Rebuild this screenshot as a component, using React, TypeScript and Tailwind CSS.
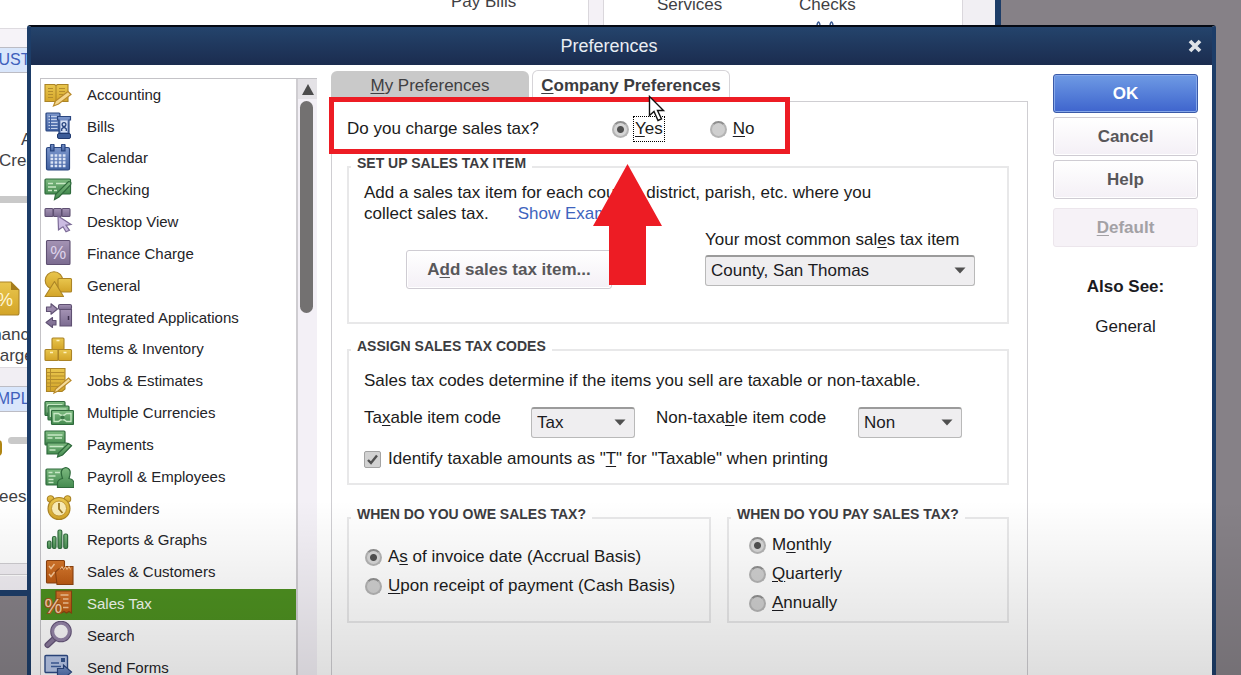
import type { ReactNode } from "react";

const gold = { fill: "url(#gold)", stroke: "#ab8426", strokeWidth: 1.1 };
const blue = { fill: "url(#blue)", stroke: "#2a4680", strokeWidth: 1.2 };
const green = { fill: "url(#green)", stroke: "#2f6a3c", strokeWidth: 1.2 };
const purple = { fill: "url(#purple)", stroke: "#5f5072", strokeWidth: 1.1 };
const orange = { fill: "url(#orange)", stroke: "#8d4310", strokeWidth: 1.1 };

function Gradients() {
  const stops: [string, string, string][] = [
    ["gold", "#e9c64e", "#d3a428"],
    ["blue", "#7d97cc", "#4262a2"],
    ["green", "#7dba80", "#448a4f"],
    ["purple", "#a493b4", "#7b6b90"],
    ["orange", "#d3752b", "#bb5912"],
  ];
  return (
    <svg className="absolute size-0" aria-hidden="true">
      <defs>
        {stops.map(([id, a, b]) => (
          <linearGradient key={id} id={id} x1="0" y1="0" x2="0" y2="1">
            <stop offset="0" stopColor={a} />
            <stop offset="1" stopColor={b} />
          </linearGradient>
        ))}
      </defs>
    </svg>
  );
}

const icons: Record<string, ReactNode> = {
  Accounting: (
    <>
      <path d="M2 4.500h9.500l1.500 1 1.500-1H25v17H14.500L13 23l-1.500-1.500H2z" {...gold} />
      <path d="M13 5.500v16" stroke="#ab8426" />
      <path d="M5 8.500h5M5 11.500h5M5 14.500h5M5 17.500h5M16 8.500h6M16 11.500h6M16 14.500h4" stroke="#b48d2c" />
      <path d="M25 11.500l3 3-12.500 9.500-5 2 2-5z" fill="#f4d68c" stroke="#b98a2a" strokeWidth="1.200" />
    </>
  ),
  Bills: (
    <>
      <rect x="3" y="1" width="14" height="18" rx="1" {...blue} />
      <path d="M5.500 4.500h9M5.500 7.500h9M5.500 10.500h9M5.500 13.500h9M5.500 16.500h9" stroke="#c3d0ea" />
      <path d="M7.500 3v14" stroke="#3f5f9f" />
      <path d="M14.500 4.500h13v3.500h-1.500V22H16V8h-1.500z" {...blue} />
      <rect x="17.500" y="8.500" width="7" height="12" fill="#d5e0f4" />
      <circle cx="21" cy="12.500" r="1.900" fill="none" stroke="#2a4680" strokeWidth="1.300" />
      <path d="M18.700 19v-2q2.300-3 4.600 0v2" fill="none" stroke="#2a4680" strokeWidth="1.300" />
      <rect x="14.500" y="21.500" width="13" height="5" rx="1.500" fill="#3c5c99" stroke="#203a70" />
    </>
  ),
  Calendar: (
    <>
      <rect x="3.500" y="3.500" width="23" height="22.500" rx="1.500" {...blue} />
      <path d="M7.500.8q2-1.200 3.500 0v6H7.500zM18.500.8q2-1.200 3.500 0v6h-3.500z" {...blue} />
      <path d="M7.500 11.500h15M7.500 15h15M7.500 18.500h15M7.500 22h15" stroke="#dbe4f5" strokeWidth="2.500" strokeDasharray="2.700 1.400" />
    </>
  ),
  Checking: (
    <>
      <rect x="2" y="4" width="25.500" height="15" rx="1" {...green} />
      <path d="M5 8.500h5M13 8.500h10M5 12h8M5 15.500h4M11 15.500h3" stroke="#c8e8c5" strokeWidth="1.300" />
      <path d="M25.500 6.500q3.500 0 2 3.500L16 22l-4.500 2.500 1-5z" {...green} />
    </>
  ),
  "Desktop View": (
    <>
      <rect x="2" y="1.500" width="8" height="8" rx="1" {...purple} />
      <rect x="10.500" y="1.500" width="8" height="8" rx="1" {...purple} />
      <rect x="19" y="1.500" width="8" height="8" rx="1" {...purple} />
      <path d="M15 9l13 8.500-5 .8 3.500 5-3.500 1.500-3-5-4.500 3z" fill="#cbbbe2" stroke="#7b6a96" strokeWidth="1.200" />
    </>
  ),
  "Finance Charge": (
    <>
      <rect x="3.500" y="1.500" width="23.500" height="24" rx="1" {...purple} />
      <text x="15.300" y="20" textAnchor="middle" fontSize="18" fill="#ddd2ea" fontFamily="Liberation Sans, sans-serif">%</text>
    </>
  ),
  General: (
    <>
      <circle cx="11" cy="9.500" r="8.800" {...gold} />
      <rect x="15" y="7.500" width="13.500" height="13.500" rx="1" {...gold} />
      <path d="M11.500 10.500L20.500 25.500H2z" {...gold} strokeLinejoin="round" />
    </>
  ),
  "Integrated Applications": (
    <>
      <path d="M3.500 4h4.500V.8L14.500 6 8 11.200V8.500H3.500zM13 17.500H9.500V14.500L3 19.500l6.500 5V22H13z" {...purple} strokeLinejoin="round" />
      <rect x="15.500" y="1.500" width="13" height="5" rx="1.500" {...purple} />
      <path d="M17 6.500h11.500v16.500H17z" {...purple} />
      <path d="M25.500 13v4" stroke="#3d304e" strokeWidth="1.500" />
    </>
  ),
  "Items & Inventory": (
    <>
      <rect x="9" y="3" width="12" height="11.500" rx="1" {...gold} />
      <rect x="2" y="14.500" width="13" height="11" rx="1" {...gold} />
      <rect x="15.500" y="14.500" width="13" height="11" rx="1" {...gold} />
      <path d="M13.500 5.500h3M7 17.500h3M20.500 17.500h3" stroke="#fff1bd" strokeWidth="1.600" />
    </>
  ),
  "Jobs & Estimates": (
    <>
      <path d="M3.500 1.500h18.500V22l-3 2.500H3.500z" {...gold} />
      <path d="M4 5.500h17.500M4 9h17.500M4 12.500h17.500M4 16h14M4 19.500h11M7.500 2v22" stroke="#b48d2c" />
      <path d="M25.500 11l2.500 2.500-13 10.500-4 2 1.500-4z" fill="#f6dc9a" stroke="#b98a2a" strokeWidth="1.200" />
    </>
  ),
  "Multiple Currencies": (
    <>
      <rect x="2" y="3.500" width="20" height="14" rx="1" {...green} />
      <path d="M4.500 6.500h15M4.500 6.500v8" stroke="#c8e8c5" strokeWidth="1.200" />
      <rect x="5" y="8" width="21" height="14" rx="1" {...green} />
      <path d="M7.500 11h16M7.500 11v8" stroke="#c8e8c5" strokeWidth="1.200" />
      <rect x="8.500" y="12.500" width="22" height="14" rx="1" {...green} />
      <path d="M11 15.500h4.500q4 4 8 0H28v8h-4.500q-4-4-8 0H11z" fill="none" stroke="#c8e8c5" strokeWidth="1.300" />
      <circle cx="19.500" cy="19.500" r="2" fill="#3c7a48" />
    </>
  ),
  Payments: (
    <>
      <rect x="2" y="1" width="20" height="14" rx="1" {...green} />
      <path d="M4.500 5h15M4.500 8h5M12 8h7" stroke="#c8e8c5" strokeWidth="1.300" />
      <path d="M4 13h20l4 3-8 8H4z" {...green} />
      <path d="M6.500 16.500h14M6.500 20h6" stroke="#c8e8c5" strokeWidth="1.300" />
      <path d="M25.500 13.500l3 2-9 9.500-5 2 1-4z" {...green} />
    </>
  ),
  "Payroll & Employees": (
    <>
      <rect x="3" y="7" width="21" height="16" rx="1" {...green} />
      <path d="M5.500 10.500h4M12 10.500h5M5.500 14h7M5.500 17.500h5M5.500 20.500h5" stroke="#c8e8c5" strokeWidth="1.300" />
      <path d="M14.500 25.500v-4q0-4 5-5-3.500-10 3.300-11 6.700 1 3.200 11 5 1 5 5v4z" {...green} />
    </>
  ),
  Reminders: (
    <>
      <circle cx="7.500" cy="5" r="3.200" {...gold} />
      <circle cx="24.500" cy="5" r="3.200" {...gold} />
      <circle cx="16" cy="14.500" r="11" {...gold} />
      <circle cx="16" cy="14.500" r="7.500" fill="#f8eab4" stroke="#c29734" />
      <path d="M16 9v6l3.500 4" fill="none" stroke="#9a7620" strokeWidth="1.800" />
    </>
  ),
  "Reports & Graphs": (
    <>
      <rect x="4.500" y="15" width="3.500" height="7.500" rx="1.500" {...green} />
      <rect x="9.500" y="10.500" width="3.500" height="12" rx="1.500" {...green} />
      <rect x="15" y="4" width="3.800" height="18.500" rx="1.500" {...green} />
      <rect x="20.800" y="8" width="3.800" height="14.500" rx="1.500" {...green} />
    </>
  ),
  "Sales & Customers": (
    <>
      <rect x="3.500" y="2.500" width="18" height="22.500" rx="1" {...orange} />
      <path d="M6 8l2 2.500L11.500 6M6 16l2 2.500 3.500-4.500" fill="none" stroke="#f6c797" strokeWidth="1.400" />
      <path d="M12.500 14l3-3h5l1.500-2.500H30V26.500H14z" {...orange} />
      <path d="M17 11.500l2-3 1.500 3 2-3 1.500 3 2-3 1.500 3" fill="none" stroke="#f6c797" />
    </>
  ),
  "Sales Tax": (
    <>
      <path d="M13 2h15.500v22l-2.500-1.500-2.500 1.500-2.500-1.500-2.500 1.500-5.500-1z" {...orange} />
      <path d="M17.500 6h8M20 10h5.500M20 14h5.500M20 18.500h5.500" stroke="#f3c596" strokeWidth="1.400" />
      <text x="10.500" y="24" textAnchor="middle" fontSize="20" stroke="#a8561a" strokeWidth="2" paintOrder="stroke" fill="#f6d3ac" fontFamily="Liberation Sans, sans-serif">%</text>
    </>
  ),
  Search: (
    <>
      <path d="M12.500 16.500L4.500 24" stroke="#66567a" strokeWidth="6" strokeLinecap="round" />
      <path d="M12.500 16.500L4.500 24" stroke="#8a7a9c" strokeWidth="3.500" strokeLinecap="round" />
      <circle cx="18" cy="10.500" r="8.300" fill="none" stroke="#66567a" strokeWidth="5" />
      <circle cx="18" cy="10.500" r="8.300" fill="#fbfafc" stroke="#9585a8" strokeWidth="3" />
    </>
  ),
  "Send Forms": (
    <>
      <rect x="2" y="2.500" width="22.500" height="17" rx="1" fill="#b9c8ea" stroke="#2f4c88" strokeWidth="1.400" />
      <path d="M8 10h8M8 13.500h10" stroke="#3f5f9f" strokeWidth="1.300" />
      <rect x="18" y="5" width="4" height="4" fill="#35558f" />
      <path d="M14.500 15.500h6V12l8 7-8 7v-3.500h-6z" {...blue} />
    </>
  ),
};

const categories = Object.keys(icons);

/* Underlines the access key of a label, written as "pre_Kpost". */
function Keyed({ text }: { text: string }) {
  const at = text.indexOf("_");
  return (
    <span>
      {text.slice(0, at)}
      <span className="underline decoration-1 underline-offset-2">{text[at + 1]}</span>
      {text.slice(at + 2)}
    </span>
  );
}

function Radio({ name, label, checked, focused }: { name: string; label: string; checked?: boolean; focused?: boolean }) {
  return (
    <label className="flex items-center gap-[6px]">
      <input
        type="radio"
        name={name}
        defaultChecked={checked}
        className="size-[17px] shrink-0 appearance-none rounded-full border-2 border-[#b4b4b4] border-t-[#8f8f8f] bg-[#cfcfcf] checked:bg-[radial-gradient(circle,#505050_3px,#d6d6d6_4px)]"
      />
      <span className={focused ? "leading-[22px] outline-1 outline-offset-1 outline-dotted outline-black" : ""}>
        <Keyed text={label} />
      </span>
    </label>
  );
}

function Select({ id, value, className }: { id: string; value: string; className: string }) {
  return (
    <div className={"relative " + className}>
      <select
        id={id}
        defaultValue={value}
        className="h-[31px] w-full appearance-none rounded-[3px] border border-[#b9b9b9] border-t-2 border-t-[#9b9b9b] bg-[#efeef0] px-[5px] text-[17px] text-[#1b1b1f]"
      >
        <option>{value}</option>
      </select>
      <svg className="pointer-events-none absolute top-3 right-[9px] h-[7px] w-3" viewBox="0 0 12 7" aria-hidden="true">
        <path d="M.5.5h11L6 6.500z" fill="#505050" />
      </svg>
    </div>
  );
}

function Group({ title, className, children }: { title: string; className: string; children: ReactNode }) {
  return (
    <fieldset className={"min-w-0 border-2 border-[#e8e8e9] " + className}>
      <legend className="ml-[2px] px-[6px] pb-2 text-sm leading-[14px] font-bold text-[#3c3c40]">{title}</legend>
      {children}
    </fieldset>
  );
}

const plainButton =
  "rounded-[3px] border border-[#cfccd3] bg-linear-to-b from-white to-[#f4f0f6] font-bold text-[#58575a] inset-shadow-[0_0_0_1px_#ffffff]";

function MainWindow() {
  const band = "absolute left-0 w-10 border-y border-[#bcbcc4] bg-[#d9e6fb] text-base leading-6 text-[#3f60bb]";
  return (
    <div className="absolute top-0 left-0 h-[596px] w-[1001px] overflow-hidden border-r-[6px] border-b-[6px] border-[#1d3d68] bg-white text-[17px] text-[#3f3f44]">
      <div className="absolute top-0 left-[588px] h-8 w-4 border-x border-[#dad7dc] bg-[#f4f1f6]" />
      <div className="absolute top-0 left-[962px] h-8 w-9 border-l border-[#dad7dc] bg-[#f1eff3]" />
      <span className="absolute -top-2 left-[451px] leading-5">Pay Bills</span>
      <span className="absolute -top-[5px] left-[657px] leading-5">Services</span>
      <span className="absolute -top-[5px] left-[799px] leading-5">Checks</span>
      <svg className="absolute top-[21px] left-[816px] h-1 w-5" viewBox="0 0 20 4" aria-hidden="true">
        <path d="M1 4q1.500-6 3 0M14 4q1.500-6 3 0" fill="none" stroke="#35558f" strokeWidth="1.500" />
      </svg>

      <div className="absolute top-7 left-0 h-5 w-10 border-t border-[#dedbe0] bg-[#f6f3f8]" />
      <div className={band + " top-[47px]"}>
        <span className="-ml-[13px]">CUSTOMERS</span>
      </div>
      <span className="absolute top-[130px] left-[21px] leading-5">Accept</span>
      <span className="absolute top-[151px] -left-[1px] leading-5">Credit</span>
      <div className="absolute top-[196px] left-0 h-[7px] w-10 bg-[#c9c9c9]" />
      <svg className="absolute top-[281px] left-0 h-[35px] w-5" viewBox="0 0 20 35" aria-hidden="true">
        <path d="M-6 1h17l8 8v23q0 2-2 2H-6z" {...gold} />
        <path d="M11 1v8h8z" fill="#a57d1c" />
        <text x="5" y="25" textAnchor="middle" fontSize="18" fill="#fff6d6" fontFamily="Liberation Sans, sans-serif">%</text>
      </svg>
      <span className="absolute top-[325px] -left-[22px] leading-5">Finance</span>
      <span className="absolute top-[346px] -left-[22px] leading-5">Charges</span>
      <div className="absolute top-[367px] left-0 h-5 w-10 border-t border-[#dedbe0] bg-[#f1eef3]" />
      <div className={band + " top-[386px]"}>
        <span className="-ml-[14px]">EMPLOYEES</span>
      </div>
      <div className="absolute top-[437px] left-2 h-[7px] w-8 rounded-full bg-[#c9c9c9]" />
      <div className="absolute top-[440px] -left-3 h-4 w-[14px] rounded-sm bg-[#b08512]" />
      <span className="absolute top-[487px] -left-[1px] leading-5">ees</span>
      <div className="absolute top-[563px] left-0 h-3 w-10 border-y border-[#cfcdd1] bg-[#f1eef3]" />
      <div className="absolute top-[576px] left-0 h-4 w-10 bg-[#f1eef3]" />
    </div>
  );
}

function Sidebar() {
  return (
    <div className="flex w-[277px] shrink-0 border-t border-l border-[#c4c3c7]">
      <ul className="flex h-[605px] flex-1 flex-col border-r-2 border-[#cfcdd1]">
        {categories.map((name) => (
          <li key={name} className="min-h-0 flex-1">
            <button
              type="button"
              className={
                name === "Sales Tax"
                  ? "flex h-full w-full items-center gap-[13px] bg-[#4d9020] pl-[2px] text-left text-[15px] text-[#f4faf0]"
                  : "flex h-full w-full items-center gap-[13px] pl-[2px] text-left text-[15px] text-[#242428]"
              }
            >
              <svg className="h-[30px] w-[31px] shrink-0" viewBox="0 0 31 30" aria-hidden="true">
                {icons[name]}
              </svg>
              {name}
            </button>
          </li>
        ))}
      </ul>
      <div className="w-[19px] bg-[#f3f0f6]">
        <div className="grid h-5 place-items-center bg-[#e4e2e6]">
          <svg className="h-[11px] w-3" viewBox="0 0 12 11" aria-hidden="true">
            <path d="M6 0l6 11H0z" fill="#4c4c4c" />
          </svg>
        </div>
        <div className="mt-[2px] ml-[2px] h-[212px] w-[13px] rounded-full bg-[#737171]" />
      </div>
    </div>
  );
}

function CompanyPanel() {
  return (
    <div className="flex-1 border-x border-t border-[#cfced2] pr-[18px] pl-[15px] text-[#1b1b20]">
      <div className="flex h-[54px] items-center">
        <span className="w-[265px]">Do you charge sales tax?</span>
        <div className="flex gap-[47px]">
          <Radio name="charge" label="_Yes" checked focused />
          <Radio name="charge" label="_No" />
        </div>
      </div>

      <Group title="SET UP SALES TAX ITEM" className="pb-[33px]">
        <div className="pr-8 pl-[15px]">
          <div className="pt-1 leading-[21px]">
            <p>Add a sales tax item for each county, district, parish, etc. where you</p>
            <div className="flex gap-[29px]">
              <p>collect sales tax.</p>
              <a href="#examples" className="text-[#3e63bd]">Show Examples</a>
            </div>
          </div>
          <div className="mt-[6px] flex items-start justify-between pl-[42px]">
            <button type="button" className={plainButton + " mt-5 h-[39px] w-[206px]"}>
              <Keyed text="A_dd sales tax item..." />
            </button>
            <div className="flex w-[270px] flex-col gap-[5px]">
              <label htmlFor="common" className="leading-5"><Keyed text="Your most common sal_es tax item" /></label>
              <Select id="common" value="County, San Thomas" className="w-full" />
            </div>
          </div>
        </div>
      </Group>

      <Group title="ASSIGN SALES TAX CODES" className="mt-[15px] pb-[13px]">
        <div className="pl-[15px]">
          <p className="pt-[9px] leading-[22px]">Sales tax codes determine if the items you sell are taxable or non-taxable.</p>
          <div className="mt-[15px] flex items-start">
            <label htmlFor="taxable" className="w-[167px] leading-[22px]"><Keyed text="Ta_xable item code" /></label>
            <Select id="taxable" value="Tax" className="w-[104px]" />
            <label htmlFor="nontaxable" className="ml-[21px] w-[202px] leading-[22px]"><Keyed text="Non-taxa_ble item code" /></label>
            <Select id="nontaxable" value="Non" className="w-[104px]" />
          </div>
          <label className="mt-[10px] flex items-center gap-[7px] leading-[22px]">
            <span className="grid size-[17px] place-items-center">
              <input type="checkbox" defaultChecked className="col-start-1 row-start-1 size-[17px] appearance-none rounded-[2px] border border-[#a3a3a3] bg-[#d2d2d2]" />
              <svg className="pointer-events-none col-start-1 row-start-1 size-[13px]" viewBox="0 0 13 13" aria-hidden="true">
                <path d="M2 7l3 3 6-7.500" fill="none" stroke="#505050" strokeWidth="2.400" />
              </svg>
            </span>
            <Keyed text={'Identify taxable amounts as "_T" for "Taxable" when printing'} />
          </label>
        </div>
      </Group>

      <div className="mt-[22px] flex gap-4">
        <Group title="WHEN DO YOU OWE SALES TAX?" className="w-[364px] pb-[23px]">
          <div className="flex flex-col gap-[7px] pt-[17px] pl-4 leading-[22px]">
            <Radio name="owe" label="A_s of invoice date (Accrual Basis)" checked />
            <Radio name="owe" label="_Upon receipt of payment (Cash Basis)" />
          </div>
        </Group>
        <Group title="WHEN DO YOU PAY SALES TAX?" className="flex-1 pb-[7px]">
          <div className="flex flex-col gap-[7px] pt-[5px] pl-5 leading-[22px]">
            <Radio name="pay" label="M_onthly" checked />
            <Radio name="pay" label="_Quarterly" />
            <Radio name="pay" label="_Annually" />
          </div>
        </Group>
      </div>
    </div>
  );
}

function Annotations() {
  return (
    <>
      <div className="pointer-events-none absolute top-[97px] left-[329px] h-[57px] w-[461px] border-[5px] border-[#ed1c24]" />
      <svg className="pointer-events-none absolute top-[164px] left-[593px] h-[121px] w-[69px]" viewBox="0 0 69 121" aria-hidden="true">
        <path d="M34.500 0L69 62H53v59H16V62H0z" fill="#ed1c24" />
      </svg>
      <svg className="pointer-events-none absolute top-[95px] left-[648px] h-7 w-5" viewBox="0 0 20 28" aria-hidden="true">
        <path d="M1.500 1.500v19l4.500-4 4 9 3.500-1.500-4-8.500h6z" fill="#fff" stroke="#111" strokeWidth="1.400" />
      </svg>
    </>
  );
}

export default function App() {
  return (
    <div className="relative h-screen overflow-hidden bg-[#868187] font-['Liberation_Sans',Arial,sans-serif] text-[17px]">
      <Gradients />
      <MainWindow />
      <main className="relative mt-[25px] mr-[25px] ml-[27px] flex h-full flex-col rounded-t-[3px] border-x-[4px] border-t-2 border-x-[#1d3d68] border-t-[#050a14] bg-white">
        <header className="flex h-[38px] items-center bg-linear-to-b from-[#24446c] to-[#1b2c4f] pr-[9px] text-[#e9edf3]">
          <h1 className="flex-1 text-center text-lg">Preferences</h1>
          <button type="button" aria-label="Close" className="grid size-4 place-items-center">
            <svg className="size-[14px]" viewBox="0 0 14 14" aria-hidden="true">
              <path d="M2 2l10 10M12 2L2 12" stroke="#dfe3e8" strokeWidth="3.800" />
            </svg>
          </button>
        </header>
        <div className="flex flex-1 pr-[14px] pl-[9px]">
          <div className="flex pt-[13px]">
            <Sidebar />
          </div>
          <div className="ml-[14px] flex flex-1 flex-col pt-[5px]">
            <div className="flex items-end gap-[3px] leading-5" role="tablist">
              <button type="button" role="tab" aria-selected="false" className="h-[30px] w-[198px] rounded-t-md bg-[#c9c9c9] text-[#3f3f42]">
                <Keyed text="_My Preferences" />
              </button>
              <button type="button" role="tab" aria-selected="true" className="h-[31px] w-[198px] rounded-t-md border border-b-0 border-[#d6d4d8] bg-white font-bold text-[#3c3c40]">
                <Keyed text="_Company Preferences" />
              </button>
            </div>
            <CompanyPanel />
          </div>
          <aside className="ml-[25px] flex w-[145px] flex-col pt-[9px]">
            <button type="button" className="h-[39px] rounded-[3px] border border-[#3a5aa8] bg-linear-to-b from-[#6f9ae4] to-[#3f64cd] font-bold text-white inset-shadow-[0_0_0_1px_#86a8ea]">OK</button>
            <button type="button" className={plainButton + " mt-1 h-[39px]"}>Cancel</button>
            <button type="button" className={plainButton + " mt-1 h-[39px]"}>Help</button>
            <button type="button" disabled className="mt-[9px] h-[39px] rounded-[3px] border border-[#ece6ec] bg-[#f6f2f7] font-bold text-[#a3a1a5]">
              <Keyed text="_Default" />
            </button>
            <h2 className="mt-[30px] text-center leading-5 font-bold text-[#1b1b1f]">Also See:</h2>
            <a href="#general" className="mt-5 text-center leading-5 text-[#1b1b1f]">General</a>
          </aside>
        </div>
      </main>
      <div className="pointer-events-none absolute inset-x-0 bottom-0 h-[175px] bg-linear-to-b from-transparent to-black/13" />
      <Annotations />
    </div>
  );
}
